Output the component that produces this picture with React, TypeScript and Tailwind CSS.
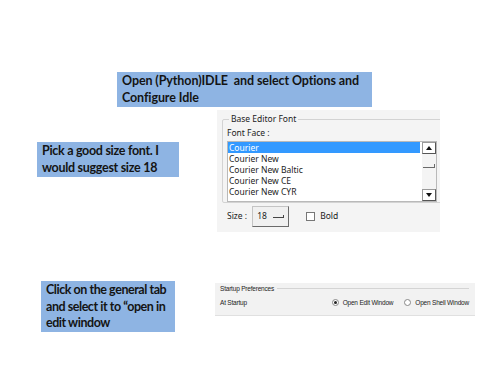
import { Fragment } from 'react'

const FONTS = ['Courier', 'Courier New', 'Courier New Baltic', 'Courier New CE', 'Courier New CYR']

function Callout({ className, lines }: { className: string; lines: string[] }) {
  return (
    <div className={`bg-[#8eb4e3] font-bold text-[#141414] leading-[16.5px] whitespace-nowrap ${className}`}>
      {lines.map((l, i) => (
        <Fragment key={i}>
          {i > 0 && <br />}
          {l}
        </Fragment>
      ))}
    </div>
  )
}

function ArrowBtn({ up }: { up?: boolean }) {
  return (
    <div className="h-[12px] border border-[#9a9a9a] border-b-[#555] border-r-[#555] bg-white flex items-center justify-center">
      <svg width="6" height="4" viewBox="0 0 6 4">
        <path d={up ? 'M0 4 L3 0 L6 4 Z' : 'M0 0 L3 4 L6 0 Z'} fill="#111" />
      </svg>
    </div>
  )
}

function FontDialog() {
  return (
    <div className="ml-[38px] w-[223px] h-[122px] overflow-hidden bg-[#f4f4f4] pl-[5px] pt-[9px] font-['Noto_Sans',sans-serif] text-[8.5px] text-[#222]">
      <div className="relative h-[84px] w-[240px] border border-[#d3d3d3] rounded-[2px] pl-[4px] pt-[7px]">
        <span className="absolute left-[6px] -top-[7px] bg-[#f4f4f4] px-[2px]">Base Editor Font</span>
        <div className="mb-[1px]">Font Face :</div>
        <div className="flex w-[210px] h-[61px] border border-[#b9b9b9] bg-white">
          <div className="flex-1 leading-[11px]">
            {FONTS.map((f, i) => (
              <div key={f} className={i === 0 ? 'bg-[#3399ff] text-white pl-[1px]' : 'pl-[1px]'}>
                {f}
              </div>
            ))}
          </div>
          <div className="w-[14px] ml-[2px] flex flex-col justify-between bg-[#f4f4f4]">
            <ArrowBtn up />
            <div className="h-[4px] mx-[1px] border-b border-r border-[#6a6a6a] -mt-[11px]" />
            <ArrowBtn />
          </div>
        </div>
      </div>
      <div className="flex items-center mt-[3px] pl-[5px]">
        <span>Size :</span>
        <div className="ml-[5px] w-[37px] h-[21px] border border-[#c4c4c4] border-b-[#6a6a6a] border-r-[#6a6a6a] bg-[#f0f0f0] flex items-center pl-[4px] gap-[6px]">
          <span>18</span>
          <span className="w-[11px] h-[3px] border-b border-r border-[#444]" />
        </div>
        <span className="ml-[17px] w-[9px] h-[9px] border border-[#777] bg-white" />
        <span className="ml-[5px]">Bold</span>
      </div>
    </div>
  )
}

function Radio({ on, label }: { on?: boolean; label: string }) {
  return (
    <span className="flex items-center gap-[4px]">
      <span className="w-[7px] h-[7px] rounded-full border border-[#888] bg-white flex items-center justify-center">
        {on && <span className="w-[3px] h-[3px] rounded-full bg-[#222]" />}
      </span>
      {label}
    </span>
  )
}

function StartupPanel() {
  return (
    <div className="ml-[40px] mt-[2px] w-[260px] h-[33px] bg-[#f2f2f2] border-b border-[#e0e0e0] pl-[5px] pr-[6px] pt-[1px] font-['Liberation_Sans',sans-serif] text-[6.5px] tracking-[-0.2px] text-[#222]">
      <div className="flex items-center gap-[3px]">
        <span>Startup Preferences</span>
        <span className="flex-1 h-px bg-[#d4d4d4]" />
      </div>
      <div className="flex items-center mt-[4px]">
        <span>At Startup</span>
        <span className="ml-auto flex gap-[11px]">
          <Radio on label="Open Edit Window" />
          <Radio label="Open Shell Window" />
        </span>
      </div>
    </div>
  )
}

export default function App() {
  return (
    <div className="w-[500px] h-[375px] bg-white overflow-hidden font-['Lato',sans-serif]">
      <div className="pt-[72px] pl-[117px]">
        <Callout
          className="w-[255px] h-[35px] pl-[5px] pt-[1px] text-[12.5px] tracking-[-0.1px]"
          lines={['Open (Python)IDLE\u00a0 and select Options and', 'Configure Idle']}
        />
      </div>
      <div className="flex items-start mt-[3px]">
        <Callout
          className="ml-[37px] mt-[32px] w-[142px] h-[35px] pl-[5px] pt-[1px] text-[12.5px] tracking-[-0.3px]"
          lines={['Pick a good size font. I', 'would suggest size 18']}
        />
        <FontDialog />
      </div>
      <div className="flex items-start mt-[49px]">
        <Callout
          className="ml-[41px] w-[134px] h-[51px] pl-[5px] pt-[1px] text-[12.5px] tracking-[-0.45px]"
          lines={['Click on the general tab', 'and select it to \u201copen in', 'edit window']}
        />
        <StartupPanel />
      </div>
    </div>
  )
}
